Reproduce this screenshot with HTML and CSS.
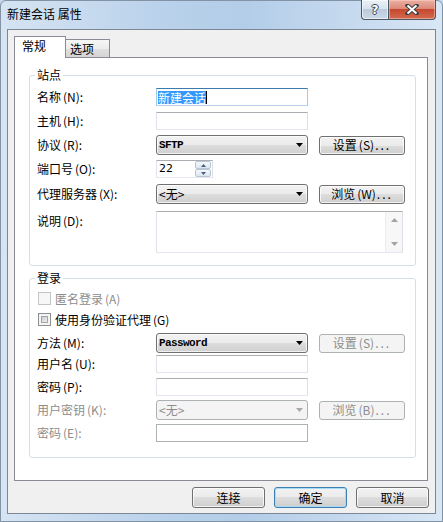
FILE: index.html
```html
<!DOCTYPE html>
<html lang="zh-CN">
<head>
<meta charset="utf-8">
<title>新建会话 属性</title>
<link rel="stylesheet" href="styles.css">
</head>
<body>
<div class="window">
  <div class="titlebar">
    <span class="title">新建会话 属性</span>
    <div class="caption">
      <div class="cap-btn help"><span class="qmark">?</span></div>
      <div class="cap-btn close">
        <svg width="14" height="11" viewBox="0 0 14 11"><path d="M2.5 1.5L11.5 9.5M11.5 1.5L2.5 9.5" stroke="#3b3f45" stroke-width="4" stroke-linecap="square"/><path d="M2.5 1.5L11.5 9.5M11.5 1.5L2.5 9.5" stroke="#fff" stroke-width="2"/></svg>
      </div>
    </div>
  </div>
  <div class="client">
    <div class="tabs">
      <div class="tab active">常规</div>
      <div class="tab">选项</div>
    </div>
    <div class="panel">
      <div class="group site">
        <span class="group-title">站点</span>
        <div class="row h18">
          <span class="label">名称<span class="mn">(N)</span>:</span>
          <div class="input focus"><span class="sel">新建会话</span><span class="caret"></span></div>
        </div>
        <div class="row h18 mt6">
          <span class="label">主机<span class="mn">(H)</span>:</span>
          <div class="input"></div>
        </div>
        <div class="row h20 mt5">
          <span class="label">协议<span class="mn">(R)</span>:</span>
          <div class="combo"><span class="mono">SFTP</span><svg class="arrow" width="7" height="4" viewBox="0 0 7 4"><path d="M0 0H7L3.5 4Z" fill="#000"/></svg></div>
          <div class="btn side">设置<span class="mn">(S)</span><span class="dots">...</span></div>
        </div>
        <div class="row h18 mt5">
          <span class="label">端口号<span class="mn">(O)</span>:</span>
          <div class="spin">
            <span class="spin-value">22</span>
            <div class="spin-btns">
              <div class="spin-btn"><svg width="5" height="3" viewBox="0 0 5 3"><path d="M0 3H5L2.5 0Z" fill="#4a5d85"/></svg></div>
              <div class="spin-btn"><svg width="5" height="3" viewBox="0 0 5 3"><path d="M0 0H5L2.5 3Z" fill="#4a5d85"/></svg></div>
            </div>
          </div>
        </div>
        <div class="row h20 mt6">
          <span class="label">代理服务器<span class="mn">(X)</span>:</span>
          <div class="combo"><span>&lt;无&gt;</span><svg class="arrow" width="7" height="4" viewBox="0 0 7 4"><path d="M0 0H7L3.5 4Z" fill="#000"/></svg></div>
          <div class="btn side">浏览<span class="mn">(W)</span><span class="dots">...</span></div>
        </div>
        <div class="row h42 mt7 top">
          <span class="label lt">说明<span class="mn">(D)</span>:</span>
          <div class="memo">
            <div class="memo-text"></div>
            <div class="vscroll">
              <svg width="7" height="4" viewBox="0 0 7 4"><path d="M0 4H7L3.5 0Z" fill="#a3a3a3"/></svg>
              <svg width="7" height="4" viewBox="0 0 7 4"><path d="M0 0H7L3.5 4Z" fill="#a3a3a3"/></svg>
            </div>
          </div>
        </div>
      </div>

      <div class="group login">
        <span class="group-title">登录</span>
        <div class="row h13">
          <span class="check disabled"></span>
          <span class="check-label gray">匿名登录<span class="mn">(A)</span></span>
        </div>
        <div class="row h13 mt8">
          <span class="check"><span class="check-inner"></span></span>
          <span class="check-label">使用身份验证代理<span class="mn">(G)</span></span>
        </div>
        <div class="row h20 mt7">
          <span class="label">方法<span class="mn">(M)</span>:</span>
          <div class="combo"><span class="mono">Password</span><svg class="arrow" width="7" height="4" viewBox="0 0 7 4"><path d="M0 0H7L3.5 4Z" fill="#000"/></svg></div>
          <div class="btn side disabled">设置<span class="mn">(S)</span><span class="dots">...</span></div>
        </div>
        <div class="row h18 mt2">
          <span class="label">用户名<span class="mn">(U)</span>:</span>
          <div class="input"></div>
        </div>
        <div class="row h18 mt5">
          <span class="label">密码<span class="mn">(P)</span>:</span>
          <div class="input"></div>
        </div>
        <div class="row h20 mt4">
          <span class="label gray">用户密钥<span class="mn">(K)</span>:</span>
          <div class="combo disabled"><span>&lt;无&gt;</span><svg class="arrow" width="7" height="4" viewBox="0 0 7 4"><path d="M0 0H7L3.5 4Z" fill="#a8a8a8"/></svg></div>
          <div class="btn side disabled">浏览<span class="mn">(B)</span><span class="dots">...</span></div>
        </div>
        <div class="row h18 mt4">
          <span class="label gray">密码<span class="mn">(E)</span>:</span>
          <div class="input disabled"></div>
        </div>
      </div>
    </div>
    <div class="footer">
      <div class="btn foot">连接</div>
      <div class="btn foot default">确定</div>
      <div class="btn foot">取消</div>
    </div>
  </div>
</div>
</body>
</html>
```

FILE: styles.css
```css
* { box-sizing: border-box; }
html, body { margin: 0; padding: 0; }
body {
  width: 443px;
  height: 522px;
  overflow: hidden;
  font-family: "Noto Sans CJK SC", "Noto Sans", sans-serif;
  font-size: 12px;
  color: #000;
  background: #c4d8ee;
}
.window {
  width: 443px;
  height: 522px;
  border: 1px solid #8393a6;
  border-radius: 6px 6px 0 0;
  background: linear-gradient(to right, #d6e4f3 0%, #bad2eb 35%, #b3cde8 55%, #c6daef 80%, #d9e7f5 100%);
  display: flex;
  flex-direction: column;
}
.titlebar {
  height: 28px;
  flex: none;
  display: flex;
  align-items: flex-start;
  padding: 0 6px;
}
.title {
  margin-top: 6px;
  line-height: 14px;
  font-size: 12px;
}
.caption {
  margin-left: auto;
  margin-top: -1px;
  display: flex;
}
.cap-btn {
  height: 20px;
  border: 1px solid #4c5662;
  border-top: none;
  display: flex;
  align-items: center;
  justify-content: center;
}
.help {
  width: 27px;
  border-right: none;
  border-radius: 0 0 0 4px;
  background: linear-gradient(#eaf0f7 0%, #d9e3ee 45%, #bccbdc 50%, #cbd9e8 100%);
  box-shadow: inset 0 0 0 1px rgba(255,255,255,0.6);
}
.qmark {
  font-family: "DejaVu Sans", sans-serif;
  font-weight: bold;
  font-size: 12px;
  line-height: 12px;
  color: #fff;
  text-shadow: 1px 0 0 #3e4650, -1px 0 0 #3e4650, 0 1px 0 #3e4650, 0 -1px 0 #3e4650;
}
.close {
  width: 48px;
  border-radius: 0 0 4px 0;
  background: linear-gradient(#eab0a3 0%, #dc8a78 45%, #c7482f 50%, #d26a50 100%);
  box-shadow: inset 0 0 0 1px rgba(255,210,200,0.5);
}
.client {
  margin: 0 6px;
  height: 485px;
  border: 1px solid #7b8794;
  background: #f0f0f0;
  padding: 6px 7px 0 6px;
  display: flex;
  flex-direction: column;
}
.tabs {
  height: 21px;
  flex: none;
  display: flex;
  align-items: flex-end;
}
.tab {
  height: 18px;
  width: 45px;
  margin-left: -1px;
  border: 1px solid #898c95;
  border-bottom: none;
  padding: 2px 0 0 4px;
  line-height: 14px;
  background: linear-gradient(#f6f6f6 0%, #ececec 50%, #e0e0e0 50%, #d4d4d4 100%);
}
.tab.active {
  position: relative;
  z-index: 1;
  margin-left: 0;
  height: 22px;
  width: 52px;
  margin-bottom: -1px;
  padding: 2px 0 0 7px;
  background: #fff;
}
.panel {
  width: 414px;
  height: 424px;
  flex: none;
  border: 1px solid #898c95;
  background: #fff;
  padding: 17px 11px 0 14px;
}
.group {
  position: relative;
  border: 1px solid #d5dfe5;
  border-radius: 3px;
  padding-left: 7px;
}
.group.site { height: 191px; padding-top: 12px; }
.group.login { height: 180px; margin-top: 12px; padding-top: 13px; }
.group-title {
  position: absolute;
  top: -8px;
  left: 5px;
  padding: 0 2px;
  background: #fff;
  line-height: 14px;
}
.row {
  display: flex;
  align-items: center;
}
.row.top { align-items: flex-start; }
.h13 { height: 13px; }
.h18 { height: 18px; }
.h20 { height: 20px; }
.h42 { height: 42px; }
.mt2 { margin-top: 2px; }
.mt4 { margin-top: 4px; }
.mt5 { margin-top: 5px; }
.mt6 { margin-top: 6px; }
.mt7 { margin-top: 7px; }
.mt8 { margin-top: 8px; }
.label {
  width: 119px;
  flex: none;
  line-height: 14px;
  white-space: nowrap;
}
.label.lt { margin-top: 3px; }
.mn { margin-left: 2px; }
.gray { color: #8d8d8d; }
.dots { letter-spacing: 2px; margin-left: 1px; }
.input {
  width: 152px;
  height: 18px;
  border: 1px solid;
  border-color: #abadb3 #dbdfe6 #e3e9ef #e2e3ea;
  background: #fff;
  display: flex;
  align-items: center;
  padding-left: 1px;
}
.input.focus {
  border-color: #3d7bad #a4c9e3 #b5cfe7 #a4c9e3;
}
.input.disabled {
  border-color: #adb2b5;
  background: #fff;
}
.sel {
  background: #3399ff;
  color: #fff;
  line-height: 13px;
  height: 13px;
  display: inline-block;
}
.caret {
  width: 1px;
  height: 13px;
  background: #000;
  display: inline-block;
}
.combo {
  width: 152px;
  height: 20px;
  flex: none;
  border: 1px solid #707070;
  border-radius: 3px;
  background: linear-gradient(#f2f2f2 0%, #ebebeb 50%, #dddddd 50%, #cfcfcf 100%);
  box-shadow: inset 0 0 0 1px rgba(255,255,255,0.7);
  display: flex;
  align-items: center;
  justify-content: space-between;
  padding: 0 4px 0 2px;
  line-height: 14px;
}
.combo.disabled {
  border-color: #adb2b5;
  background: #f4f4f4;
  box-shadow: none;
  color: #8d8d8d;
}
.mono {
  font-family: "Liberation Mono", monospace;
  font-size: 11px;
  font-weight: bold;
  letter-spacing: -0.6px;
}
.arrow { flex: none; }
.btn {
  height: 19px;
  border: 1px solid #707070;
  border-radius: 3px;
  background: linear-gradient(#f2f2f2 0%, #ebebeb 50%, #dddddd 50%, #cfcfcf 100%);
  box-shadow: inset 0 0 0 1px rgba(255,255,255,0.75);
  display: flex;
  align-items: center;
  justify-content: center;
  line-height: 14px;
  white-space: nowrap;
}
.btn.side {
  width: 86px;
  margin-left: 11px;
}
.btn.disabled {
  border-color: #adb2b5;
  background: #f4f4f4;
  box-shadow: none;
  color: #8d8d8d;
}
.spin {
  width: 57px;
  height: 18px;
  border: 1px solid;
  border-color: #abadb3 #dbdfe6 #e3e9ef #e2e3ea;
  background: #fff;
  display: flex;
  align-items: center;
}
.spin-value {
  flex: 1;
  padding-left: 2px;
  font-family: "DejaVu Sans", sans-serif;
  font-size: 11px;
  line-height: 14px;
}
.spin-btns {
  width: 16px;
  height: 16px;
  margin-right: 1px;
  display: flex;
  flex-direction: column;
}
.spin-btn {
  height: 8px;
  border: 1px solid #b9c6d6;
  border-radius: 2px;
  background: linear-gradient(#f6f9fc, #dce5ef);
  display: flex;
  align-items: center;
  justify-content: center;
}
.memo {
  width: 247px;
  height: 42px;
  border: 1px solid;
  border-color: #abadb3 #dbdfe6 #e3e9ef #e2e3ea;
  background: #fff;
  display: flex;
}
.memo-text { flex: 1; }
.vscroll {
  width: 17px;
  background: #f7f7f7;
  border-left: 1px solid #ececec;
  display: flex;
  flex-direction: column;
  justify-content: space-between;
  align-items: center;
  padding: 6px 0 6px;
}
.check {
  width: 13px;
  height: 13px;
  margin-left: 1px;
  flex: none;
  border: 1px solid #8e8f8f;
  background: #f4f4f4;
  padding: 2px;
}
.check.disabled {
  border-color: #c2c4c6;
  background: #f7f7f7;
}
.check-inner {
  display: block;
  width: 7px;
  height: 7px;
  border: 1px solid #a2a6ab;
  background: linear-gradient(135deg, #c8ccd2, #eef0f2);
}
.check-label {
  margin-left: 4px;
  line-height: 14px;
  white-space: nowrap;
}
.footer {
  margin-top: 6px;
  margin-right: -1px;
  display: flex;
  justify-content: flex-end;
  gap: 9px;
}
.btn.foot {
  width: 73px;
  height: 21px;
}
.btn.default {
  border-color: #3c7fb1;
  box-shadow: inset 0 0 0 1px #a8dcf5;
}
```
